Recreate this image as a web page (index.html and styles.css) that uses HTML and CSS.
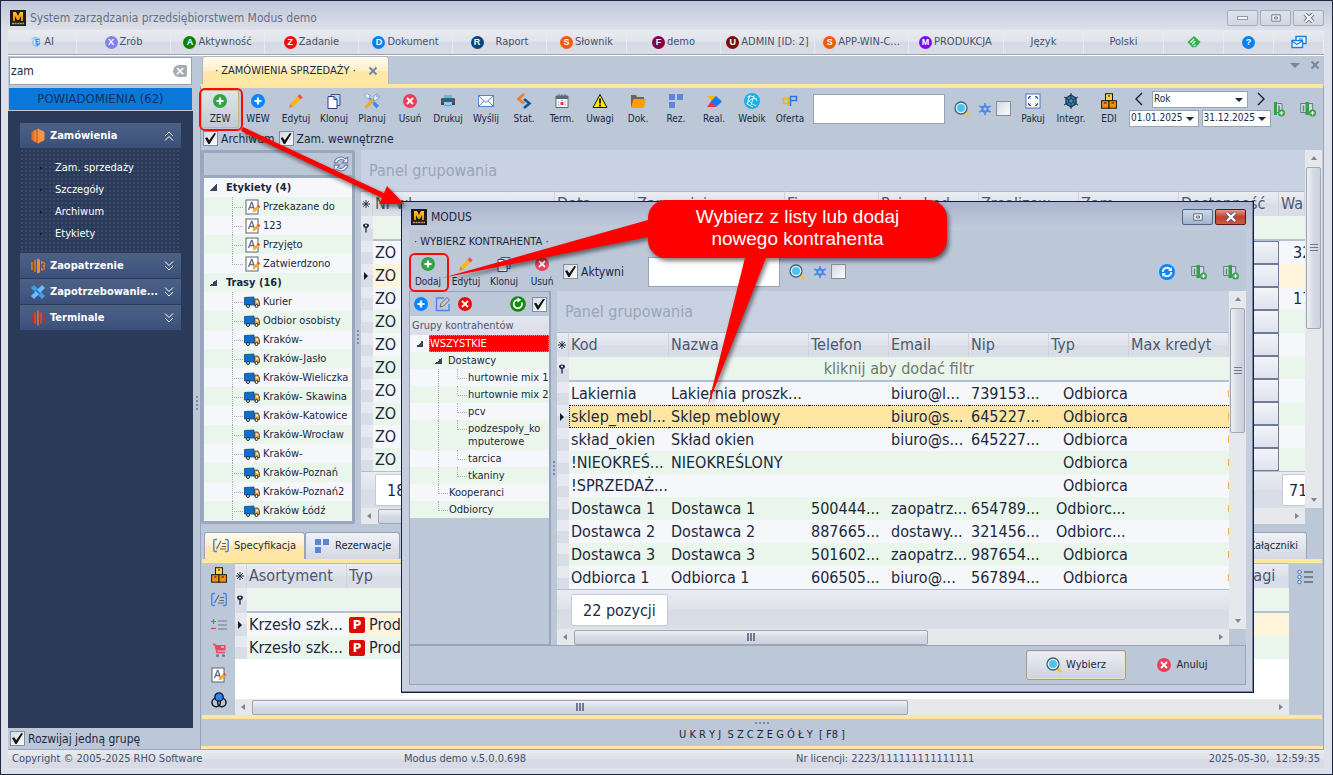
FILE: index.html
```
<!DOCTYPE html>
<html lang="pl">
<head>
<meta charset="utf-8">
<title>System zarządzania przedsiębiorstwem Modus demo</title>
<link rel="stylesheet" href="styles.css">
</head>
<body>
<svg class="defs" aria-hidden="true">
  <defs>
    <linearGradient id="gold" x1="0" y1="0" x2="0" y2="1"><stop offset="0" stop-color="#ffc928"/><stop offset="1" stop-color="#f08a00"/></linearGradient>
    <symbol id="logo" viewBox="0 0 16 16"><rect width="16" height="16" fill="#1d1d1d"/><path d="M3 11V2h3l2 4 2-4h3v9h-2V6l-2 4H7L5 6v5z" fill="url(#gold)"/><path d="M2 13.500h12" stroke="#c9a050" stroke-width="1.500" stroke-dasharray="2 .6"/></symbol>
    <symbol id="plus" viewBox="0 0 16 16"><circle cx="8" cy="8" r="7" fill="currentColor"/><path d="M8 4.500v7M4.500 8h7" stroke="#fff" stroke-width="2.200"/></symbol>
    <symbol id="pencil" viewBox="0 0 16 16"><path d="M1 15l1.500-4.500 3 3z" fill="#e0892a"/><path d="M2.500 10.500l7-7 3 3-7 7z" fill="#ffb31a"/><path d="M9.500 3.500l2.200-2.200 3 3-2.200 2.200z" fill="#ee4d5c"/></symbol>
    <symbol id="copy" viewBox="0 0 16 16"><path d="M5 1.500h9v11H5z" fill="#aee0f5" stroke="#4a4a9c"/><path d="M2 3.500h6l3 3v9H2z" fill="#fff" stroke="#39397e"/><path d="M8 3.500v3h3" fill="none" stroke="#39397e"/></symbol>
    <symbol id="tools" viewBox="0 0 16 16"><path d="M4 4l8 8" stroke="#5a9be5" stroke-width="2.200"/><path d="M10.500 8.500l4.500 4-2.500 3-3.500-4z" fill="#3f8ae4"/><path d="M1.500 14.500L10 6" stroke="#f5a623" stroke-width="3"/><path d="M9.500 6.500l.8-4L13.500.8 12.500 3.500l3-.6-1.500 3-3 1.600z" fill="#e9f1fb" stroke="#5a9be5" stroke-width=".8"/><path d="M.8 2l2.500-1.500L6 2.800 5 5.500 2.500 5z" fill="#fff" stroke="#5a9be5" stroke-width=".8"/></symbol>
    <symbol id="del" viewBox="0 0 16 16"><circle cx="8" cy="8" r="7" fill="currentColor"/><path d="M5 5l6 6M11 5l-6 6" stroke="#fff" stroke-width="1.800"/></symbol>
    <symbol id="printer" viewBox="0 0 16 16"><path d="M4 2h8v4H4z" fill="#64b5f6"/><rect x="1" y="5" width="14" height="6.500" rx="1" fill="#455a64"/><path d="M1 10h14v2H1z" fill="#37474f"/><path d="M4 9h8v5H4z" fill="#90caf9"/><path d="M4 12.500h8" stroke="#42a5f5"/></symbol>
    <symbol id="mail" viewBox="0 0 16 16"><rect x=".5" y="2.500" width="15" height="11" fill="#fff" stroke="#5b82cc"/><path d="M1 3l7 6.500L15 3M1 13l5-5M15 13l-5-5" fill="none" stroke="#5b82cc"/></symbol>
    <symbol id="stat" viewBox="0 0 16 16"><path d="M8 1L2.500 6 8 10.500" fill="none" stroke="#f07c28" stroke-width="2.600"/><path d="M8 6l5.500 4.500L8 15" fill="none" stroke="#0d5796" stroke-width="2.600"/></symbol>
    <symbol id="cal" viewBox="0 0 16 16"><path d="M2 3h12v11.500H2z" fill="#fff" stroke="#5d6778"/><path d="M2 3h12v3H2z" fill="#5d6778"/><path d="M5 1v3M8 1v3M11 1v3" stroke="#5d6778"/><path d="M4 9h1.500M4 12h1.500M10.500 9H12M10.500 12H12M7 7.500h2" stroke="#8e97a6" stroke-width="1.200"/><rect x="6.500" y="9" width="3" height="3" fill="#e8354a"/></symbol>
    <symbol id="warn" viewBox="0 0 16 16"><path d="M8 1.500l7 13H1z" fill="#f6e600" stroke="#111" stroke-linejoin="round"/><path d="M8 5.500v5M8 11.500v2" stroke="#111" stroke-width="1.800"/></symbol>
    <symbol id="folder" viewBox="0 0 16 16"><path d="M1 2h5l1 2h7v3H1z" fill="#74614f"/><path d="M1 15V4h3v3z" fill="#74614f"/><path d="M3.500 6H16l-2 9H1z" fill="#ff9d0a"/></symbol>
    <symbol id="squares" viewBox="0 0 16 16"><path d="M1 1h6v6H1zM9 1h6v6H9zM1 9h6v6H1z" fill="#5b87d6"/></symbol>
    <symbol id="real" viewBox="0 0 16 16"><path d="M1 3h9L6 8z" fill="#ffb300"/><path d="M1 14l5-7 4 7z" fill="#f23434"/><path d="M10 3l6 5.500-6 5.500-5-5.500z" fill="#1479f2"/></symbol>
    <symbol id="webik" viewBox="0 0 16 16"><circle cx="8" cy="8" r="8" fill="#1cb0e6"/><path d="M4 3.500c3-1 7 0 9 4.500M4 3.500c0 4 3 8 8 9M3 11c2-4 5-6 10-5M6 2l-3 9 6 3M10 2.500L7 12" stroke="#d6f4ff" fill="none"/></symbol>
    <symbol id="offer" viewBox="0 0 16 16"><path d="M1.500 5.500h5v5h-5zM6.500 6v7" fill="none" stroke="#f5ae1d" stroke-width="1.500"/><path d="M8.500 3v10M8.500 3.500h6v4h-6" fill="none" stroke="#2878e8" stroke-width="1.500"/></symbol>
    <symbol id="search" viewBox="0 0 16 16"><path d="M11 11l4 4" stroke="#f8c13c" stroke-width="3"/><circle cx="7" cy="7" r="6" fill="#e8f7fd" stroke="#3c6478" stroke-width="1.300"/><circle cx="7" cy="7" r="4" fill="#4cc3f2"/></symbol>
    <symbol id="gear" viewBox="0 0 16 16"><circle cx="8" cy="8" r="3" fill="none" stroke="#4a86ee" stroke-width="2.400"/><path d="M8 1v4M8 11v4M1.500 4.500l4 2M10.500 9.500l4 2M1.500 11.500l4-2M10.500 6.500l4-2" stroke="#4a86ee" stroke-width="1.800"/></symbol>
    <symbol id="pack" viewBox="0 0 16 16"><rect x="1" y="1" width="14" height="14" fill="#fff" stroke="#4b74b8"/><path d="M3.500 6V3.500H6M10 3.500h2.500V6M3.500 10v2.500H6M10 12.500h2.500V10M4 4l2 2M12 4l-2 2M4 12l2-2M12 12l-2-2" stroke="#2f5dae" fill="none" stroke-dasharray="2 1"/></symbol>
    <symbol id="integr" viewBox="0 0 16 16"><path d="M8 2l5 3v6l-5 3-5-3V5z" fill="#3c86b4" stroke="#1b3245" stroke-width="1.300"/><path d="M8 0v16M1 4l14 8M15 4L1 12" stroke="#1b3245"/><circle cx="8" cy="8" r="2.300" fill="#2b9ad4" stroke="#1b3245"/></symbol>
    <symbol id="boxes" viewBox="0 0 16 16"><rect x="4.500" y=".7" width="7" height="7" fill="#ffd43a" stroke="#1a1a1a"/><rect x=".6" y="7.700" width="7.400" height="7.500" fill="#f78e10" stroke="#1a1a1a"/><rect x="8" y="7.700" width="7.400" height="7.500" fill="#f78e10" stroke="#1a1a1a"/><path d="M7 3h2M3 10h2.500M10.500 10H13" stroke="#1a1a1a"/></symbol>
    <symbol id="cols" viewBox="0 0 16 16"><path d="M.7 2.500h12v9H.7z" fill="#d3dae4" stroke="#6d7a8c"/><path d="M3.500 4.500v6" stroke="#6d7a8c" stroke-width="1.500"/><path d="M5.500 1h3.500v13H5.500z" fill="#35a24a"/><circle cx="12.500" cy="12" r="3.500" fill="#35a24a"/><path d="M12.500 10v4M10.500 12h4" stroke="#fff" stroke-width="1.200"/></symbol>
    <symbol id="colsb" viewBox="0 0 16 16"><path d="M5 2.500h6v9H5z" fill="#d3dae4" stroke="#6d7a8c"/><path d="M8 4.500v6" stroke="#6d7a8c" stroke-width="1.500"/><path d="M3 1h3v13H3z" fill="#35a24a"/><circle cx="10.500" cy="12" r="3.500" fill="#35a24a"/><path d="M10.500 10v4M8.500 12h4" stroke="#fff" stroke-width="1.200"/></symbol>
    <symbol id="refresh" viewBox="0 0 16 16"><path d="M2 7a6 6 0 0 1 10-3.500L14 2v5H9l2-2a4 4 0 0 0-6.500 2zM14 9a6 6 0 0 1-10 3.500L2 14V9h5l-2 2a4 4 0 0 0 6.500-2z" fill="#edf0f8" stroke="#6678a2" stroke-width=".9"/></symbol>
    <symbol id="sync" viewBox="0 0 16 16"><circle cx="8" cy="8" r="8" fill="#0a84ff"/><path d="M3.700 8a4.300 4.300 0 0 1 7.300-3M12.300 8a4.300 4.300 0 0 1-7.300 3" fill="none" stroke="#fff" stroke-width="1.800"/><path d="M12.800 3v4H9zM3.200 13V9H7z" fill="#fff"/></symbol>
    <symbol id="cycle" viewBox="0 0 16 16"><circle cx="8" cy="8" r="7.800" fill="#0b8a0b"/><path d="M11.800 6.500a4.200 4.200 0 1 1-4-2.700" fill="none" stroke="#fff" stroke-width="1.800"/><path d="M7.500 1.500l4 2.500-4 2.500z" fill="#fff"/></symbol>
    <symbol id="label" viewBox="0 0 16 16"><rect x="1" y="1" width="12" height="14" fill="#fff" stroke="#5d6470"/><path d="M3.500 11l3-7.500h.5L9.500 11M4.500 8.500h4" fill="none" stroke="#687080" stroke-width="1.300"/><path d="M7.500 13.500l1-3 4-4 2 2-4 4z" fill="#ffab1a"/><path d="M12 7l1.200-1.200 2 2L14 9z" fill="#ee4040"/></symbol>
    <symbol id="truck" viewBox="0 0 16 12"><path d="M.5 1.500L10 1v8H.5z" fill="#0f6fd0" stroke="#134a80" stroke-width=".8"/><path d="M10.500 3h3.500l1.500 3v3.500h-5z" fill="#f39a1f" stroke="#33404e" stroke-width=".8"/><path d="M12 4.500h1.500l1 2H12z" fill="#e8f4fb"/><circle cx="4" cy="10" r="1.500" fill="#dfe5ea" stroke="#222b35"/><circle cx="12.500" cy="10" r="1.500" fill="#dfe5ea" stroke="#222b35"/></symbol>
    <symbol id="spec" viewBox="0 0 16 16"><path d="M4 1.500H2q-1.200 0-1.200 1.200v9.600q0 1.200 1.200 1.200h2M12 1.500h2q1.200 0 1.200 1.200v9.600q0 1.200-1.200 1.200h-2" fill="none" stroke="#4a88e8" stroke-width="1.500"/><path d="M3.500 11L8 3M9 5.500h4M8.500 8.500h4.500M7 11h6" fill="none" stroke="#5e6772" stroke-width="1.200"/></symbol>
    <symbol id="plusminus" viewBox="0 0 16 16"><path d="M0 4.500h5M2.500 2v5" stroke="#35a24a" stroke-width="1.200"/><path d="M0 11.500h5" stroke="#e8404f" stroke-width="1.200"/><path d="M7 4h9M7 8h9M7 12h9" stroke="#8c95a1" stroke-width="1.700"/></symbol>
    <symbol id="cart" viewBox="0 0 16 16"><path d="M5 3h9.500v5.500H5z" fill="#e9495d"/><path d="M2 2.500h2l2 8h8" fill="none" stroke="#e9495d" stroke-width="1.400"/><path d="M10 5h3" stroke="#fff"/><circle cx="6.500" cy="13.500" r="1.500" fill="#707a88"/><circle cx="12.500" cy="13.500" r="1.500" fill="#707a88"/></symbol>
    <symbol id="rings" viewBox="0 0 16 16"><circle cx="5.200" cy="10.500" r="4.200" fill="none" stroke="#101820" stroke-width="1.500"/><circle cx="10.800" cy="10.500" r="4.200" fill="none" stroke="#101820" stroke-width="1.500"/><circle cx="8" cy="5" r="4.200" fill="#2a86f5" stroke="#101820" stroke-width="1.300"/></symbol>
    <symbol id="listico" viewBox="0 0 16 16"><path d="M7 3h9M7 8h9M7 13h9" stroke="#263a55" stroke-width="1.200"/><g fill="#fff" stroke="#2f6fce"><circle cx="2.500" cy="3" r="1.700"/><circle cx="2.500" cy="8" r="1.700"/><circle cx="2.500" cy="13" r="1.700"/></g></symbol>
    <symbol id="editbox" viewBox="0 0 16 16"><path d="M9 2H1.500v12.500H14V8" fill="none" stroke="#4a88e8" stroke-width="1.400"/><path d="M5 11l1-3.500 6-6 2.500 2.500-6 6z" fill="#c3cbd8" stroke="#5e6a7c"/></symbol>
    <symbol id="ai" viewBox="0 0 16 16"><path d="M2 3l5-2 6 2 1 7-4 5-6-2z" fill="#9cc4fa"/><path d="M7 4h6v7l-4 3z" fill="#4a8df0"/><path d="M3 5l3 1v5M9 6h3v3H9" fill="none" stroke="#fff"/></symbol>
    <symbol id="feedly" viewBox="0 0 16 16"><path d="M8 1l7.500 7L10 14H6L.5 8z" fill="#2bb24c"/><path d="M4 8.500L8 4.500M6 10.500l3.500-3.500M8 12.500l1.500-1.500" stroke="#fff" stroke-width="1.500"/></symbol>
    <symbol id="mails" viewBox="0 0 16 16"><path d="M5 2.500h10v7H5z" fill="#fff" stroke="#1680e8" stroke-width="1.400"/><path d="M1 6.500h10.500v7H1z" fill="#fff" stroke="#1680e8" stroke-width="1.400"/><path d="M1 7l5 3.500L11 7M8 5h4" fill="none" stroke="#1680e8" stroke-width="1.200"/></symbol>
    <symbol id="up2" viewBox="0 0 10 10"><path d="M1 5l4-4 4 4M1 9.500l4-4 4 4" fill="none" stroke="#fff"/></symbol>
    <symbol id="down2" viewBox="0 0 10 10"><path d="M1 .5l4 4 4-4M1 5l4 4 4-4" fill="none" stroke="#fff"/></symbol>
    <symbol id="modO" viewBox="0 0 16 16"><path d="M1.500 4L8 .5v15L1.500 12z" fill="#e0701f"/><path d="M8 .5L14.500 4v8L8 15.500z" fill="#f8934a"/><path d="M5 2.200v11.600" stroke="#f8a566"/></symbol>
    <symbol id="modZ" viewBox="0 0 16 16"><path d="M1 4h2v8H1zM4 2h2v12H4z" fill="#c8702c"/><path d="M7 .5l3 1v13l-3 1z" fill="#f08a3c"/><path d="M11 3l4 1.500v7L11 13z" fill="#d9783a"/><path d="M14 6h-2v4h2" stroke="#5a3a2a" fill="none"/></symbol>
    <symbol id="modX" viewBox="0 0 16 16"><path d="M11 1h4l-5 7 5 7h-4L1 8z" fill="#2f8ad8" opacity="0"/><path d="M1 4l3-3 11 11-3 3z" fill="#3d9ff0"/><path d="M15 4l-3-3L1 12l3 3z" fill="#6cbcf8"/><path d="M6 6l4 4" stroke="#1f6cb4" stroke-width="1.500"/></symbol>
    <symbol id="modT" viewBox="0 0 16 16"><path d="M1 4h2v8H1zM13 4h2v8h-2z" fill="#a8392f"/><path d="M4 2.500h2v11H4zM10 2.500h2v11h-2z" fill="#c9483c"/><path d="M7 .5h2v15H7z" fill="#e25b4c"/></symbol>
    <symbol id="filter" viewBox="0 0 8 10"><path d="M1 2.500a3 2 0 0 1 6 0q0 1.500-2 2.500H3Q1 4 1 2.500z" fill="#1b293e"/><circle cx="4" cy="2.500" r="1" fill="#fff"/><path d="M4 5v4.500" stroke="#1b293e" stroke-width="1.300"/></symbol>
    <symbol id="star" viewBox="0 0 8 8"><path d="M4 0v8M0 4h8M1.200 1.200l5.600 5.600M6.800 1.200L1.200 6.800" stroke="#1b293e" stroke-width=".9"/></symbol>
    <symbol id="cur" viewBox="0 0 8 8"><path d="M2 0l4 4-4 4z" fill="#101c2e"/></symbol>
    <symbol id="close" viewBox="0 0 10 10"><path d="M1.500 1.500l7 7M8.500 1.500l-7 7" stroke="currentColor" stroke-width="2"/></symbol>
    <symbol id="max" viewBox="0 0 10 8"><path d="M.8.8h8.400v6.400H.8z" fill="#fff" stroke="#5a6478" stroke-width="1"/><path d="M3.500 3h3v2h-3z" fill="#fff" stroke="#5a6478"/></symbol>
    <symbol id="wx" viewBox="0 0 12 10"><path d="M2 1l8 8M10 1L2 9" stroke="#4c566a" stroke-width="4"/><path d="M2 1l8 8M10 1L2 9" stroke="#fff" stroke-width="2.400"/></symbol>
  </defs>
</svg>

<div class="window">
  <header class="titlebar">
    <svg class="i16"><use href="#logo"/></svg>
    <h1>System zarządzania przedsiębiorstwem Modus demo</h1>
    <div class="winbtns">
      <button aria-label="Minimalizuj"><span class="minus"></span></button>
      <button aria-label="Maksymalizuj"><svg width="10" height="8"><use href="#max"/></svg></button>
      <button aria-label="Zamknij"><svg width="12" height="10"><use href="#wx"/></svg></button>
    </div>
  </header>

  <nav class="menubar">
    <button><svg class="i12"><use href="#ai"/></svg>AI</button>
    <button><i class="badge lilac">X</i>Zrób</button>
    <button><i class="badge green">A</i>Aktywność</button>
    <button><i class="badge red">Z</i>Zadanie</button>
    <button><i class="badge blue">D</i>Dokument</button>
    <button class="wide"><i class="badge navy">R</i>Raport</button>
    <button><i class="badge orange">S</i>Słownik</button>
    <button><i class="badge plum">F</i>demo</button>
    <button><i class="badge maroon">U</i>ADMIN [ID: 2]</button>
    <button><i class="badge orange">S</i>APP-WIN-C...</button>
    <button class="start"><i class="badge violet">M</i>PRODUKCJA</button>
    <button>Język</button>
    <button>Polski</button>
    <button aria-label="Feedly"><svg class="i14"><use href="#feedly"/></svg></button>
    <button aria-label="Pomoc"><i class="badge blue">?</i></button>
    <button aria-label="Poczta"><svg class="i16"><use href="#mails"/></svg></button>
  </nav>

  <div class="main">
    <aside class="sidebar">
      <div class="searchbox"><input type="text" value="zam" aria-label="Szukaj w menu"><button aria-label="Wyczyść">×</button></div>
      <button class="notify">POWIADOMIENIA (62)</button>
      <div class="nav">
        <button class="group"><svg class="i16"><use href="#modO"/></svg><span>Zamówienia</span><svg class="i10"><use href="#up2"/></svg></button>
        <ul>
          <li><a href="#">Zam. sprzedaży</a></li>
          <li><a href="#">Szczegóły</a></li>
          <li><a href="#">Archiwum</a></li>
          <li><a href="#">Etykiety</a></li>
        </ul>
        <button class="group"><svg class="i16"><use href="#modZ"/></svg><span>Zaopatrzenie</span><svg class="i10"><use href="#down2"/></svg></button>
        <button class="group"><svg class="i16"><use href="#modX"/></svg><span>Zapotrzebowanie...</span><svg class="i10"><use href="#down2"/></svg></button>
        <button class="group"><svg class="i16"><use href="#modT"/></svg><span>Terminale</span><svg class="i10"><use href="#down2"/></svg></button>
      </div>
      <label class="check foot"><input type="checkbox" checked>Rozwijaj jedną grupę</label>
    </aside>
    <div class="vsplit"><span class="dots"></span></div>

    <section class="content">
      <div class="tabstrip">
        <div class="tab">· ZAMÓWIENIA SPRZEDAŻY ·<button aria-label="Zamknij kartę"><svg class="i10"><use href="#close"/></svg></button></div>
        <div class="tabtools"><span class="tri"></span><svg class="i10"><use href="#close"/></svg></div>
      </div>
      <div class="page">
        <div class="toolbar">
          <button class="tool hot"><svg class="i16 c-green"><use href="#plus"/></svg>ZEW</button>
          <button class="tool"><svg class="i16 c-blue"><use href="#plus"/></svg>WEW</button>
          <button class="tool"><svg class="i16"><use href="#pencil"/></svg>Edytuj</button>
          <button class="tool"><svg class="i16"><use href="#copy"/></svg>Klonuj</button>
          <button class="tool"><svg class="i16"><use href="#tools"/></svg>Planuj</button>
          <button class="tool"><svg class="i16 c-rose"><use href="#del"/></svg>Usuń</button>
          <button class="tool"><svg class="i16"><use href="#printer"/></svg>Drukuj</button>
          <button class="tool"><svg class="i16"><use href="#mail"/></svg>Wyślij</button>
          <button class="tool"><svg class="i16"><use href="#stat"/></svg>Stat.</button>
          <button class="tool"><svg class="i16"><use href="#cal"/></svg>Term.</button>
          <button class="tool"><svg class="i16"><use href="#warn"/></svg>Uwagi</button>
          <button class="tool"><svg class="i16"><use href="#folder"/></svg>Dok.</button>
          <button class="tool"><svg class="i16"><use href="#squares"/></svg>Rez.</button>
          <button class="tool"><svg class="i16"><use href="#real"/></svg>Real.</button>
          <button class="tool"><svg class="i16"><use href="#webik"/></svg>Webik</button>
          <button class="tool"><svg class="i16"><use href="#offer"/></svg>Oferta</button>
          <input class="find" type="text" aria-label="Szukaj">
          <button class="ico" aria-label="Znajdź"><svg class="i16"><use href="#search"/></svg></button>
          <button class="ico" aria-label="Ustawienia"><svg class="i14"><use href="#gear"/></svg></button>
          <input class="box" type="checkbox" aria-label="Opcja">
          <span class="gap"></span>
          <button class="tool"><svg class="i16"><use href="#pack"/></svg>Pakuj</button>
          <button class="tool"><svg class="i16"><use href="#integr"/></svg>Integr.</button>
          <button class="tool"><svg class="i16"><use href="#boxes"/></svg>EDI</button>
          <div class="period">
            <div class="line"><button class="arr" aria-label="Poprzedni"><svg width="10" height="14"><path d="M8 1L2 7l6 6" fill="none" stroke="#101820" stroke-width="1.300"/></svg></button><div class="combo"><select aria-label="Okres"><option>Rok</option></select></div><button class="arr" aria-label="Następny"><svg width="10" height="14"><path d="M2 1l6 6-6 6" fill="none" stroke="#101820" stroke-width="1.300"/></svg></button></div>
            <div class="line"><div class="combo"><select aria-label="Od"><option>01.01.2025</option></select></div><div class="combo"><select aria-label="Do"><option>31.12.2025</option></select></div></div>
          </div>
          <button class="ico right" aria-label="Kolumna"><svg class="i16"><use href="#colsb"/></svg></button>
          <button class="ico right" aria-label="Dodaj kolumnę"><svg class="i16"><use href="#cols"/></svg></button>
        </div>
        <div class="options">
          <label class="check"><input type="checkbox" checked>Archiwum</label>
          <label class="check"><input type="checkbox" checked>Zam. wewnętrzne</label>
        </div>

        <div class="work">
          <div class="treepanel">
            <div class="treehead"><svg width="18" height="18"><use href="#refresh"/></svg></div>
            <ul class="tree">
              <li class="root"><span class="exp"></span>Etykiety (4)</li>
              <li><svg class="i16"><use href="#label"/></svg>Przekazane do</li>
              <li><svg class="i16"><use href="#label"/></svg>123</li>
              <li><svg class="i16"><use href="#label"/></svg>Przyjęto</li>
              <li class="last"><svg class="i16"><use href="#label"/></svg>Zatwierdzono</li>
              <li class="root"><span class="exp"></span>Trasy (16)</li>
              <li><svg class="trk"><use href="#truck"/></svg>Kurier</li>
              <li><svg class="trk"><use href="#truck"/></svg>Odbior osobisty</li>
              <li><svg class="trk"><use href="#truck"/></svg>Kraków-</li>
              <li><svg class="trk"><use href="#truck"/></svg>Kraków-Jasło</li>
              <li><svg class="trk"><use href="#truck"/></svg>Kraków-Wieliczka</li>
              <li><svg class="trk"><use href="#truck"/></svg>Kraków- Skawina</li>
              <li><svg class="trk"><use href="#truck"/></svg>Kraków-Katowice</li>
              <li><svg class="trk"><use href="#truck"/></svg>Kraków-Wrocław</li>
              <li><svg class="trk"><use href="#truck"/></svg>Kraków-</li>
              <li><svg class="trk"><use href="#truck"/></svg>Kraków-Poznań</li>
              <li><svg class="trk"><use href="#truck"/></svg>Kraków-Poznań2</li>
              <li><svg class="trk"><use href="#truck"/></svg>Kraków Łódź</li>
            </ul>
          </div>
          <div class="vsplit thin"><span class="dots"></span></div>
          <div class="gridwrap">
            <div class="gridcol">
              <div class="grouppanel">Panel grupowania</div>
              <table class="grid orders">
                <colgroup><col class="w12"><col class="w182"><col class="w80"><col class="w150"><col class="w94"><col class="w100"><col class="w100"><col class="w100"><col class="w100"><col></colgroup>
                <thead><tr><th><svg class="i8"><use href="#star"/></svg></th><th>Nr wł.</th><th>Data</th><th>Zamawiający</th><th>Firma</th><th>Pojazd od</th><th>Zrealizow.</th><th>Zam.</th><th>Dostępność</th><th>Wartość</th></tr></thead>
                <tbody>
                  <tr class="filter"><td><svg class="flt"><use href="#filter"/></svg></td><td colspan="9"></td></tr>
                  <tr><td></td><td>ZO</td><td></td><td></td><td></td><td></td><td></td><td></td><td class="cellbtn"></td><td class="num">32</td></tr>
                  <tr class="current"><td><svg class="i8"><use href="#cur"/></svg></td><td>ZO</td><td></td><td></td><td></td><td></td><td></td><td></td><td class="cellbtn"></td><td></td></tr>
                  <tr><td></td><td>ZO</td><td></td><td></td><td></td><td></td><td></td><td></td><td class="cellbtn"></td><td class="num">17</td></tr>
                  <tr class="alt"><td></td><td>ZO</td><td></td><td></td><td></td><td></td><td></td><td></td><td class="cellbtn"></td><td></td></tr>
                  <tr><td></td><td>ZO</td><td></td><td></td><td></td><td></td><td></td><td></td><td class="cellbtn"></td><td></td></tr>
                  <tr class="alt"><td></td><td>ZO</td><td></td><td></td><td></td><td></td><td></td><td></td><td class="cellbtn"></td><td></td></tr>
                  <tr><td></td><td>ZO</td><td></td><td></td><td></td><td></td><td></td><td></td><td class="cellbtn"></td><td></td></tr>
                  <tr class="alt"><td></td><td>ZO</td><td></td><td></td><td></td><td></td><td></td><td></td><td class="cellbtn"></td><td></td></tr>
                  <tr><td></td><td>ZO</td><td></td><td></td><td></td><td></td><td></td><td></td><td class="cellbtn"></td><td></td></tr>
                  <tr class="alt"><td></td><td>ZO</td><td></td><td></td><td></td><td></td><td></td><td></td><td class="cellbtn"></td><td></td></tr>
                </tbody>
              </table>
              <div class="gridfoot"><span class="sum">18</span><span class="sum end">71</span></div>
              <div class="hscroll"><span class="al"></span><span class="thumb half"></span><span class="ar"></span></div>
            </div>
            <div class="vscroll"><span class="au"></span><span class="thumb tall"><b></b></span><span class="ad"></span></div>
          </div>
        </div>

        <div class="subtabs">
          <button class="sub on"><svg class="i16"><use href="#spec"/></svg>Specyfikacja</button>
          <button class="sub"><svg class="i16"><use href="#squares"/></svg>Rezerwacje</button>
          <button class="sub end">Załączniki</button>
        </div>
        <div class="spec">
          <div class="specicons">
            <svg class="i16"><use href="#boxes"/></svg>
            <svg class="i16"><use href="#spec"/></svg>
            <svg class="i16"><use href="#plusminus"/></svg>
            <svg class="i16"><use href="#cart"/></svg>
            <svg class="i16"><use href="#label"/></svg>
            <svg class="i16"><use href="#rings"/></svg>
          </div>
          <div class="specgrid">
            <table class="grid">
              <colgroup><col class="w12"><col class="w100"><col class="w150"><col><col class="w60"></colgroup>
              <thead><tr><th><svg class="i8"><use href="#star"/></svg></th><th>Asortyment</th><th>Typ</th><th></th><th>Uwagi</th></tr></thead>
              <tbody>
                <tr class="filter"><td><svg class="flt"><use href="#filter"/></svg></td><td colspan="4"></td></tr>
                <tr class="current second"><td><svg class="i8"><use href="#cur"/></svg></td><td>Krzesło szk...</td><td><i class="ptag">P</i>Produkcja</td><td></td><td></td></tr>
                <tr class="alt"><td></td><td>Krzesło szk...</td><td><i class="ptag">P</i>Produkcja</td><td></td><td></td></tr>
              </tbody>
            </table>
            <div class="hscroll"><span class="al"></span><span class="thumb spect"><b></b></span><span class="ar"></span></div>
          </div>
          <div class="specside"><svg class="i16"><use href="#listico"/></svg></div>
        </div>
        <button class="hide"><span class="hdots"></span>U K R Y J&nbsp;&nbsp;S Z C Z E G Ó Ł Y&nbsp;&nbsp;[ F8 ]</button>
      </div>
    </section>
  </div>

  <footer class="status">
    <span>Copyright © 2005-2025 RHO Software</span>
    <span>Modus demo v.5.0.0.698</span>
    <span>Nr licencji: 2223/111111111111111</span>
    <span>2025-05-30,&nbsp; 12:59:35</span>
  </footer>
</div>

<div class="dialog" role="dialog" aria-label="MODUS">
  <div class="dtitle">
    <svg class="i16"><use href="#logo"/></svg><h2>MODUS</h2>
    <div class="winbtns">
      <button aria-label="Maksymalizuj"><svg width="10" height="8"><use href="#max"/></svg></button>
      <button class="x" aria-label="Zamknij"><svg width="12" height="10"><use href="#wx"/></svg></button>
    </div>
  </div>
  <div class="dbody">
    <div class="dcaption">· WYBIERZ KONTRAHENTA ·</div>
    <div class="dtools">
      <button class="tool"><svg class="i16 c-green"><use href="#plus"/></svg>Dodaj</button>
      <button class="tool"><svg class="i16"><use href="#pencil"/></svg>Edytuj</button>
      <button class="tool"><svg class="i16"><use href="#copy"/></svg>Klonuj</button>
      <button class="tool"><svg class="i16 c-rose"><use href="#del"/></svg>Usuń</button>
      <label class="check act"><input type="checkbox" checked>Aktywni</label>
      <input class="find" type="text" aria-label="Szukaj kontrahenta">
      <button class="ico" aria-label="Znajdź"><svg class="i16"><use href="#search"/></svg></button>
      <button class="ico" aria-label="Ustawienia"><svg class="i14"><use href="#gear"/></svg></button>
      <input class="box" type="checkbox" aria-label="Opcja">
      <div class="dright">
        <button class="ico" aria-label="Odśwież"><svg class="i16"><use href="#sync"/></svg></button>
        <button class="ico" aria-label="Kolumny"><svg class="i16"><use href="#cols"/></svg></button>
        <button class="ico" aria-label="Dodaj kolumnę"><svg class="i16"><use href="#cols"/></svg></button>
      </div>
    </div>
    <div class="dwork">
      <div class="dtree">
        <div class="dticons">
          <svg class="i16 c-blue"><use href="#plus"/></svg>
          <svg class="i16"><use href="#editbox"/></svg>
          <svg class="i16 c-red"><use href="#del"/></svg>
          <svg class="i16 push"><use href="#cycle"/></svg>
          <input class="box" type="checkbox" checked aria-label="Filtruj grupy">
        </div>
        <div class="dthead">Grupy kontrahentów</div>
        <ul class="groups">
          <li class="l0"><span class="exp"></span><b>WSZYSTKIE</b></li>
          <li class="l1"><span class="exp"></span>Dostawcy</li>
          <li class="l2">hurtownie mix 1</li>
          <li class="l2">hurtownie mix 2</li>
          <li class="l2">pcv</li>
          <li class="l2 two">podzespoły_ko<br>mputerowe</li>
          <li class="l2">tarcica</li>
          <li class="l2 last">tkaniny</li>
          <li class="l1">Kooperanci</li>
          <li class="l1 last">Odbiorcy</li>
        </ul>
      </div>
      <div class="vsplit thin"><span class="dots"></span></div>
      <div class="gridcol">
        <div class="grouppanel">Panel grupowania</div>
        <table class="grid clients">
          <colgroup><col class="w12"><col class="w100"><col class="w140"><col class="w80"><col class="w80"><col class="w80"><col class="w80"><col></colgroup>
          <thead><tr><th><svg class="i8"><use href="#star"/></svg></th><th>Kod</th><th>Nazwa</th><th>Telefon</th><th>Email</th><th>Nip</th><th>Typ</th><th>Max kredyt</th></tr></thead>
          <tbody>
            <tr class="filter"><td><svg class="flt"><use href="#filter"/></svg></td><td colspan="7">kliknij aby dodać filtr</td></tr>
            <tr><td></td><td>Lakiernia</td><td>Lakiernia proszk...</td><td></td><td>biuro@l...</td><td>739153...</td><td class="t">Odbiorca</td><td></td></tr>
            <tr class="sel"><td><svg class="i8"><use href="#cur"/></svg></td><td>sklep_mebl...</td><td>Sklep meblowy</td><td></td><td>biuro@s...</td><td>645227...</td><td class="t">Odbiorca</td><td></td></tr>
            <tr><td></td><td>skład_okien</td><td>Skład okien</td><td></td><td>biuro@s...</td><td>645227...</td><td class="t">Odbiorca</td><td></td></tr>
            <tr class="alt"><td></td><td>!NIEOKREŚ...</td><td>NIEOKREŚLONY</td><td></td><td></td><td></td><td class="t">Odbiorca</td><td></td></tr>
            <tr><td></td><td>!SPRZEDAŻ...</td><td></td><td></td><td></td><td></td><td class="t">Odbiorca</td><td></td></tr>
            <tr class="alt"><td></td><td>Dostawca 1</td><td>Dostawca 1</td><td>500444...</td><td>zaopatrz...</td><td>654789...</td><td class="t wide">Odbiorc...</td><td></td></tr>
            <tr><td></td><td>Dostawca 2</td><td>Dostawca 2</td><td>887665...</td><td>dostawy...</td><td>321456...</td><td class="t wide">Odbiorc...</td><td></td></tr>
            <tr class="alt"><td></td><td>Dostawca 3</td><td>Dostawca 3</td><td>501602...</td><td>zaopatrz...</td><td>987654...</td><td class="t">Odbiorca</td><td></td></tr>
            <tr><td></td><td>Odbiorca 1</td><td>Odbiorca 1</td><td>606505...</td><td>biuro@...</td><td>567894...</td><td class="t">Odbiorca</td><td></td></tr>
          </tbody>
        </table>
        <div class="gridfoot"><span class="sum">22 pozycji</span></div>
        <div class="hscroll"><span class="al"></span><span class="thumb half"><b></b></span><span class="ar"></span></div>
      </div>
      <div class="vscroll"><span class="au"></span><span class="thumb mid"><b></b></span><span class="ad"></span></div>
    </div>
    <div class="dactions">
      <button class="primary"><svg class="i16"><use href="#search"/></svg>Wybierz</button>
      <button><svg class="i16 c-rose"><use href="#del"/></svg>Anuluj</button>
    </div>
  </div>
</div>

<svg class="marks" aria-hidden="true">
  <g fill="none" stroke="#ff0a0a" stroke-width="2"><rect x="200" y="89" width="42" height="41" rx="5"/><rect x="410" y="254" width="38" height="37" rx="5"/></g>
  <g class="shade" fill="#f00">
    <path d="M243 127l-2 4L382 198l-3 6 25 0-17-18-3 7z"/>
    <path d="M666 200H929a18 18 0 0 1 18 18V240a18 18 0 0 1-18 18H766L708 405 745 258H666a18 18 0 0 1-18-18V237L442 278 648 220V218a18 18 0 0 1 18-18z"/>
  </g>
</svg>
<p class="callout">Wybierz z listy lub dodaj<br>nowego kontrahenta</p>
</body>
</html>
```
FILE: styles.css
```
* { box-sizing: border-box; }
html, body { height: 100%; }
body {
  margin: 0;
  font: 11px/14px "DejaVu Sans Condensed", "Noto Sans", sans-serif;
  color: #1b293e;
  overflow: hidden;
  position: relative;
}
button { font: inherit; color: inherit; background: none; border: 0; padding: 0; margin: 0; }
input, select { font: inherit; color: inherit; margin: 0; }
ul { list-style: none; margin: 0; padding: 0; }
h1, h2 { margin: 0; font-weight: normal; }
svg { display: block; flex: none; }
.defs { position: absolute; width: 0; height: 0; }
.i8 { width: 8px; height: 8px; }
.i10 { width: 10px; height: 10px; }
.i12 { width: 12px; height: 12px; }
.i14 { width: 14px; height: 14px; }
.i16 { width: 16px; height: 16px; }
.flt { width: 8px; height: 10px; }
.trk { width: 16px; height: 12px; }
.c-green { color: #35a24a; }
.c-blue { color: #0a84ff; }
.c-rose { color: #e8405a; }
.c-red { color: #f20a0a; }

.window {
  height: 100vh;
  display: flex;
  flex-direction: column;
  border: 1px solid #1d2742;
  padding: 0 8px 6px 7px;
  background: linear-gradient(#c0c7da, #dee1ea 30px);
}
.titlebar { display: flex; align-items: center; gap: 4px; height: 29px; padding: 4px 0 0 2px; }
.titlebar h1 { flex: 1; font-size: 12px; color: #66707f; }
.winbtns { display: flex; gap: 2px; }
.winbtns button {
  width: 31px;
  height: 16px;
  display: grid;
  place-items: center;
  border: 1px solid #9aa3b6;
  border-radius: 2px;
  background: linear-gradient(#e4e8f0, #d0d5e1);
  opacity: .8;
}
.minus { width: 11px; height: 4px; border: 1px solid #808a9c; background: #fff; }

.menubar {
  display: grid;
  grid-template-columns: 69fr 94fr 94fr 94fr 94fr 94fr 80fr 94fr 94fr 94fr 95fr 80fr 80fr 60fr 50fr 50fr;
  height: 25px;
  border-bottom: 1px solid #9d9ea6;
  background: linear-gradient(#e9ebf0, #dfe2e9 50%, #d6dae4 50%, #dadde7);
  color: #43526b;
}
.menubar button { display: flex; align-items: center; justify-content: center; gap: 2px; border-right: 1px solid #e8eaf0; white-space: nowrap; overflow: hidden; }
.menubar .wide { gap: 12px; }
.menubar .start { justify-content: flex-start; padding-left: 10px; }
.badge {
  width: 13px;
  height: 13px;
  flex: none;
  border-radius: 50%;
  color: #fff;
  font: bold 9px/13px "Liberation Sans", sans-serif;
  text-align: center;
}
.lilac { background: #8080f0; }
.green { background: #0b800b; }
.red { background: #f20d0d; }
.blue { background: #0a80f5; }
.navy { background: #0d4480; }
.orange { background: #f25a0a; }
.plum { background: #80004a; }
.maroon { background: #800a0a; }
.violet { background: #7d0af2; }

.main { flex: 1; min-height: 0; display: flex; background: #bcc7d8; border-top: 1px solid #fff; }
.sidebar { width: 185px; display: flex; flex-direction: column; }
.searchbox { display: flex; align-items: center; height: 28px; margin: 1px 1px 3px; padding-right: 4px; background: #fff; border: 1px solid #98a4b6; }
.searchbox input { flex: 1; min-width: 0; border: 0; outline: 0; padding: 0 1px; font-size: 12px; background: none; }
.searchbox button { width: 14px; height: 12px; border-radius: 6px 2px 2px 6px; background: #a7abb0; color: #fff; font: bold 12px/12px "DejaVu Sans", sans-serif; }
.notify { height: 22px; margin: 0 1px 1px; background: #0a78d8; border: 1px solid #0a78d8; font-size: 13px; color: #12305a; }
.nav { flex: 1; min-height: 0; padding: 12px 12px 0; background: #2b3a58; }
.group {
  display: flex;
  align-items: center;
  gap: 4px;
  width: 100%;
  height: 25px;
  margin-bottom: 1px;
  padding: 0 7px 0 10px;
  background: linear-gradient(#4d6082, #445a83 50%, #3b5078);
  color: #fff;
  font-weight: bold;
  text-align: left;
}
.group span { flex: 1; white-space: nowrap; }
.nav ul { height: 104px; padding: 8px 0; background: radial-gradient(#394a6b 1px, transparent 1px) 0 0 / 4px 4px; }
.nav li { display: flex; align-items: center; height: 22px; padding-left: 20px; }
.nav li::before { content: ""; width: 2px; height: 2px; margin-right: 13px; background: #131c30; }
.nav a { color: #fff; text-decoration: none; }
.check { display: flex; align-items: center; gap: 3px; font-size: 12px; white-space: nowrap; }
.foot { height: 21px; padding-left: 2px; }
.check input, .box {
  appearance: none;
  width: 15px;
  height: 15px;
  flex: none;
  border: 1px solid #848e9e;
  background: linear-gradient(135deg, #d5dae2, #fbfcfd);
  display: grid;
  place-items: center;
}
.check input:checked::after, .box:checked::after {
  content: "";
  width: 11px;
  height: 11px;
  background: #111;
  clip-path: polygon(0 45%, 20% 38%, 38% 65%, 85% 0, 100% 5%, 42% 100%, 30% 100%);
}

.vsplit { width: 7px; display: grid; place-items: center; }
.vsplit.thin { width: 6px; }
.dots { width: 2px; height: 14px; background: repeating-linear-gradient(#7d8cab 0 2px, transparent 2px 4px); }

.content { flex: 1; min-width: 0; display: flex; flex-direction: column; }
.tabstrip { display: flex; justify-content: space-between; height: 28px; padding: 0 4px 0 2px; }
.tab {
  display: flex;
  align-items: center;
  gap: 12px;
  padding: 0 10px 0 12px;
  border: 1px solid #b0b6c0;
  border-bottom: 0;
  border-radius: 3px 3px 0 0;
  background: linear-gradient(#fffbef, #fff0c8 50%, #ffe8a6 50%);
}
.tab button, .tabtools svg { color: #7884a0; }
.tabtools { display: flex; align-items: center; gap: 10px; height: 18px; }
.tri { border: 5px solid transparent; border-top-color: #7884a0; border-bottom: 0; }
.page {
  flex: 1;
  min-height: 0;
  display: flex;
  flex-direction: column;
  border: 1px solid #98a4bc;
  border-top: 4px solid #ffe6a2;
  border-bottom: 0;
  border-radius: 0 3px 0 0;
}
.toolbar { display: flex; align-items: center; height: 41px; }
.tool { width: 38px; flex: none; display: flex; flex-direction: column; align-items: center; gap: 3px; font-size: 10px; line-height: 13px; white-space: nowrap; height: 38px; padding-top: 3px; }
.hot { border: 1px solid #c8b878; border-radius: 3px; background: linear-gradient(#e0e4ea, #c2cad8); padding-top: 2px; }
.find { width: 132px; height: 30px; margin: 0 5px 0 4px; border: 1px solid #98a4b6; background: #fff; }
.ico { width: 23px; flex: none; display: grid; place-items: center; }
.gap { width: 3px; }
.period { width: 142px; display: flex; flex-direction: column; gap: 2px; margin-left: 1px; }
.line { display: flex; align-items: center; gap: 3px; }
.arr { width: 20px; flex: none; display: grid; place-items: center; }
.combo { flex: 1; position: relative; }
.combo::after { content: ""; position: absolute; right: 5px; top: 7px; border: 4px solid transparent; border-top: 4px solid #1b293e; border-bottom: 0; pointer-events: none; }
.combo select { appearance: none; width: 100%; height: 17px; padding: 0 1px; border: 1px solid #98a4b6; border-radius: 0; background: #fff; font-size: 10px; }
.ico.right { width: 15px; }
.ico.right + .ico.right { margin-left: 14px; }
.options { display: flex; gap: 4px; height: 21px; padding: 0 0 2px 2px; }

.work { display: flex; height: 374px; padding-right: 1px; }
.treepanel { width: 154px; padding: 3px; border-radius: 2px; background: #9aa8be; display: flex; flex-direction: column; }
.treehead { height: 22px; margin-bottom: 3px; padding-right: 2px; display: flex; align-items: center; justify-content: flex-end; background: #bcc7d8; }
.tree { flex: 1; background: #f5f7fa; overflow: hidden; }
.tree li { position: relative; display: flex; align-items: center; gap: 2px; height: 19px; padding-left: 41px; white-space: nowrap; }
.tree .trk { margin-left: -1px; margin-right: 1px; }
.tree li:nth-child(even) { background: #eaf6ec; }
.tree .root { padding-left: 6px; gap: 9px; font-weight: bold; }
.exp { width: 7px; height: 7px; flex: none; background: linear-gradient(135deg, transparent 50%, #3a465c 50%); }
.tree li:not(.root)::before { content: ""; position: absolute; left: 28px; top: 0; width: 10px; height: 10px; border-left: 1px dotted #a6b0c0; border-bottom: 1px dotted #a6b0c0; }
.tree li:not(.root):not(.last)::after { content: ""; position: absolute; left: 28px; top: 10px; height: 9px; border-left: 1px dotted #a6b0c0; }

.gridwrap { flex: 1; min-width: 0; display: flex; }
.gridcol { flex: 1; min-width: 0; display: flex; flex-direction: column; }
.grouppanel { height: 41px; padding-left: 8px; background: #c9d2e3; color: #9aa5b8; font-size: 16px; line-height: 42px; }
.grid { width: 100%; table-layout: fixed; border-collapse: separate; border-spacing: 0; font-size: 16px; line-height: 20px; }
.w12 { width: 12px; }
.w60 { width: 60px; }
.w80 { width: 80px; }
.w94 { width: 94px; }
.w100 { width: 100px; }
.w140 { width: 140px; }
.w150 { width: 150px; }
.w182 { width: 182px; }
.grid th {
  height: 25px;
  padding: 0 2px;
  text-align: left;
  font-weight: normal;
  color: #4b5870;
  border-top: 1px solid #aeb9cd;
  border-right: 1px solid #cdd3df;
  background: linear-gradient(#e9ecf1, #dfe2ea 50%, #d8dce6 50%, #dadee7);
  overflow: hidden;
  white-space: nowrap;
}
.grid td { height: 23px; padding: 0 2px; white-space: nowrap; overflow: hidden; background: #f5f7fa; }
.grid .alt td, .grid .filter td { background: #eaf6ec; }
.grid .filter td { height: 25px; border-bottom: 2px solid #b4bfd3; color: #6e7672; text-align: center; }
.grid .current td { background: #fff4dc; }
.grid .second td:nth-child(2) { background: #f5f7fa; }
.grid .sel td { background: #ffe6a2; border: 1px dotted #111; border-width: 1px 0; }
.grid .sel td:nth-child(2) { border-left-width: 1px; padding-left: 1px; }
.clients tr:not(.filter) td:last-child { background-image: linear-gradient(#f5b04a, #f5b04a); background-size: 1px 7px; background-position: right center; background-repeat: no-repeat; }
.grid tr > :first-child { padding: 0 0 0 1px; overflow: visible; }
.grid tbody tr td:first-child { background: linear-gradient(#e6e9ef 50%, #d9dde7 50%); }
.grid .filter td:first-child { border-color: #d9dde7; }
.grid .sel td:first-child { border: 0; }
.grid tr .cellbtn.cellbtn { border: 1px solid #6e7c96; background: linear-gradient(#f2f4f8, #dfe2ee); }
.grid .num { padding-left: 14px; }
.grid .t { padding-left: 14px; overflow: visible; }
.grid .t.wide { padding-left: 7px; }
.gridfoot { flex: 1; display: flex; justify-content: space-between; align-items: center; padding-left: 14px; border-top: 1px solid #b4bfd3; background: linear-gradient(#e9ecf1, #dfe2ea 50%, #d8dce6 50%, #dadee7); font-size: 16px; overflow: hidden; }
.sum { min-width: 48px; height: 32px; padding: 0 11px; border: 1px solid #c5cbd6; border-radius: 2px; background: #fff; line-height: 31px; }
.sum.end { min-width: 0; width: 23px; padding: 0 6px; border-right: 0; overflow: hidden; }
.hscroll { height: 16px; flex: none; display: flex; align-items: center; background: #e7e8eb; }
.vscroll { width: 17px; flex: none; display: flex; flex-direction: column; align-items: center; margin-bottom: 16px; background: #e7e8eb; }
.thumb { display: grid; place-items: center; border: 1px solid #9ea5b3; border-radius: 2px; background: linear-gradient(#eef0f5, #d6dae5 50%, #cbd1df); }
.hscroll .thumb { height: 15px; }
.vscroll .thumb { width: 15px; background: linear-gradient(90deg, #eef0f5, #d6dae5 50%, #cbd1df); }
.thumb b { width: 8px; height: 8px; background: repeating-linear-gradient(90deg, #6e7a90 0 2px, transparent 2px 3px); }
.vscroll .thumb b { background: repeating-linear-gradient(#6e7a90 0 1px, transparent 1px 3px); }
.half { width: 354px; }
.spect { width: 656px; }
.tall { height: 162px; }
.mid { height: 125px; }
.al, .ar, .au, .ad { border: 3px solid transparent; }
.al { border-right: 4px solid #7c8494; border-left: 0; margin: 0 7px 0 6px; }
.ar { border-left: 4px solid #7c8494; border-right: 0; margin: 0 6px 0 auto; }
.au { border-bottom: 4px solid #7c8494; border-top: 0; margin: 6px 0 7px; }
.ad { border-top: 4px solid #7c8494; border-bottom: 0; margin: auto 0 6px; }

.subtabs { display: flex; height: 35px; padding: 8px 16px 0 3px; }
.sub {
  display: flex;
  align-items: center;
  gap: 5px;
  padding: 0 8px;
  border: 1px solid #98a4bc;
  border-bottom: 0;
  border-radius: 3px 3px 0 0;
  background: linear-gradient(#f0f2f6, #d2d7e2);
}
.sub.on { background: linear-gradient(#fffbef, #fff0c8 50%, #ffe8a6 50%); }
.sub.end { margin-left: auto; }
.spec { flex: 1; min-height: 0; display: flex; margin: 0 1px; border: solid #ffe6a2; border-width: 4px 0; }
.specicons { width: 33px; display: flex; flex-direction: column; align-items: center; gap: 9px; padding: 4px 0; }
.specgrid { flex: 1; min-width: 0; display: flex; flex-direction: column; justify-content: space-between; background: #fff; }
.specside { width: 33px; padding: 6px 8px; }
.ptag { display: inline-block; width: 16px; height: 16px; margin-right: 4px; border-radius: 2px; background: #dd0808; color: #fff; font: bold 13px/16px "DejaVu Sans Condensed", sans-serif; text-align: center; vertical-align: 1px; }
.hide { height: 30px; flex: none; border-bottom: 3px solid #ffe6a2; display: flex; flex-direction: column; align-items: center; gap: 4px; padding-top: 3px; }
.hdots { width: 14px; height: 2px; background: repeating-linear-gradient(90deg, #7d8cab 0 2px, transparent 2px 4px); }

.status { display: grid; grid-template-columns: 392fr 392fr 392fr 140fr; height: 19px; border-top: 1px solid #98a4bc; background: linear-gradient(#e9ebf0, #dfe2e9 50%, #d8dbe5 50%); color: #43526b; line-height: 17px; white-space: nowrap; }
.status span { padding: 0 4px; }
.status span:last-child { text-align: right; }

.dialog {
  position: absolute;
  left: 401px;
  top: 201px;
  width: 853px;
  height: 492px;
  display: flex;
  flex-direction: column;
  padding: 0 7px 7px;
  border: 1px solid #14203a;
  box-shadow: inset -1px -1px 0 #7486a6;
  background: linear-gradient(#a9b5cf, #c3cbdc 28px, #c9d0df);
}
.dtitle { display: flex; align-items: center; gap: 4px; height: 28px; padding: 2px 0 0 2px; }
.dtitle h2 { flex: 1; font-size: 12px; }
.dtitle .winbtns button { opacity: 1; border-color: #4f6384; background: linear-gradient(#c9d8e8, #9fb6ce); }
.dtitle .winbtns .x { border-color: #5a1a14; background: linear-gradient(#e09a90, #c0402c 50%, #d05a44); }
.dbody { flex: 1; min-height: 0; display: flex; flex-direction: column; background: #bcc7d8; }
.dcaption { height: 22px; padding: 5px 5px 0; }
.dtools { display: flex; align-items: center; height: 39px; }
.dtools .tool { height: 38px; padding-top: 3px; }
.act { width: 83px; padding-left: 2px; }
.dright { display: flex; gap: 9px; margin-left: auto; padding-right: 4px; }
.dwork { flex: 1; min-height: 0; display: flex; }
.dtree { width: 142px; border: 1px solid #98a4bc; border-right-width: 2px; }
.dticons { display: flex; align-items: center; gap: 6px; height: 24px; padding: 0 2px 0 3px; }
.dticons .push { margin-left: auto; }
.dthead { height: 19px; padding: 3px 2px 0; background: linear-gradient(#e4e7ee, #d9dde7); color: #4b5870; }
.groups li { position: relative; display: flex; align-items: center; min-height: 17px; gap: 6px; line-height: 13px; background: #f5f7fa; white-space: nowrap; }
.groups li:nth-child(even) { background: #eaf6ec; }
.groups .l0 { padding-left: 6px; }
.groups .l0 b { flex: 1; padding: 1px 1px; outline: 1px dotted #18d0e0; outline-offset: -1px; background: #f00; color: #fff; font-weight: normal; line-height: 15px; }
.groups .l1 { padding-left: 39px; }
.groups .l1:has(.exp) { padding-left: 25px; }
.groups .l2 { padding-left: 58px; }
.groups .two { height: 30px; }
.groups li:not(:has(.exp))::before { content: ""; position: absolute; left: 28px; top: 0; width: 9px; height: 9px; border-left: 1px dotted #a6b0c0; border-bottom: 1px dotted #a6b0c0; }
.groups li.l2.l2::before { left: 47px; }
.groups .l2::after { content: ""; position: absolute; left: 28px; top: 0; bottom: 0; border-left: 1px dotted #a6b0c0; }
.dactions { display: flex; align-items: center; justify-content: flex-end; height: 40px; padding-right: 13px; border: 1px solid #98a4bc; }
.dactions button { display: flex; align-items: center; justify-content: center; gap: 4px; width: 100px; height: 30px; }
.dactions .primary { border: 1px solid #98a08e; border-radius: 3px; box-shadow: inset 0 0 0 1px #f3e3b4; background: linear-gradient(#eceff3, #ccd2de); }
.dactions .primary + button { margin-left: 6px; }

.marks { position: absolute; left: 0; top: 0; width: 100%; height: 100%; pointer-events: none; }
.shade { filter: drop-shadow(2px 3px 2px rgba(0, 0, 0, .5)); }
.callout { position: absolute; left: 648px; top: 206px; width: 299px; margin: 0; color: #fff; font: 19px/22px "Liberation Sans", sans-serif; text-align: center; }
```
